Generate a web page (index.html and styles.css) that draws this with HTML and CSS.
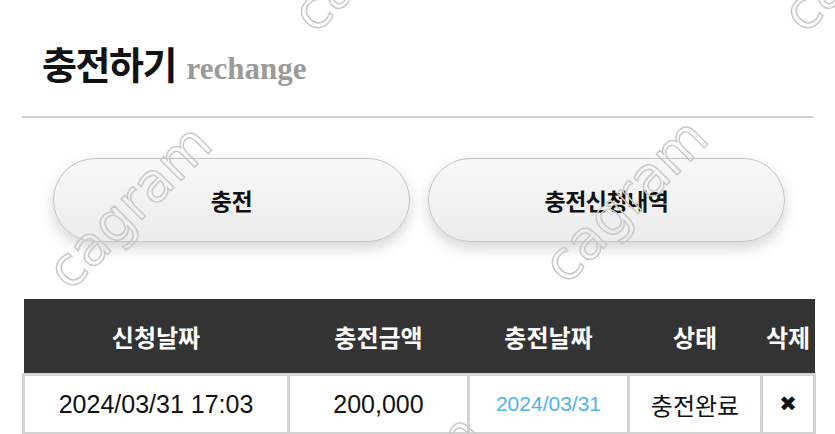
FILE: index.html
```html
<!DOCTYPE html>
<html lang="ko">
<head>
<meta charset="utf-8">
<link rel="stylesheet" href="styles.css">
</head>
<body>
<div class="page">
  <h1 class="title"><span class="title-ko">충전하기</span> <span class="title-en">rechange</span></h1>
  <hr class="divider">
  <div class="tabs">
    <button class="pill">충전</button>
    <button class="pill">충전신청내역</button>
  </div>
  <table class="list">
    <thead>
      <tr>
        <th class="c1">신청날짜</th>
        <th class="c2">충전금액</th>
        <th class="c3">충전날짜</th>
        <th class="c4">상태</th>
        <th class="c5">삭제</th>
      </tr>
    </thead>
    <tbody>
      <tr>
        <td>2024/03/31 17:03</td>
        <td>200,000</td>
        <td class="date">2024/03/31</td>
        <td class="ko">충전완료</td>
        <td class="del">✖</td>
      </tr>
    </tbody>
  </table>
  <div class="wm wm1">cagram</div>
  <div class="wm wm2">cagram</div>
  <div class="wm wm3">cagram</div>
  <div class="wm wm4">cagram</div>
  <div class="wm wm5">cagram</div>
</div>
</body>
</html>
```

FILE: styles.css
```css
html, body {
  margin: 0;
  padding: 0;
  background: #fff;
  overflow: hidden;
}
.page {
  position: relative;
  width: 835px;
  height: 434px;
  overflow: hidden;
  padding: 0 22px;
  box-sizing: border-box;
  font-family: "Noto Sans CJK KR", "Liberation Sans", sans-serif;
}
.title {
  margin: 0;
  padding: 41px 0 0 20px;
  font-size: 38px;
  line-height: 44px;
  white-space: nowrap;
}
.title-ko {
  font-size: 38px;
  font-weight: 700;
  color: #111;
  letter-spacing: -1.5px;
}
.title-en {
  font-family: "Liberation Serif", serif;
  font-size: 31px;
  font-weight: 700;
  color: #9a9a9a;
  margin-left: 0;
}
.divider {
  margin: 25px 0 0 0;
  border: 0;
  height: 2px;
  background: #cfcfcf;
}
.tabs {
  display: flex;
  gap: 18px;
  padding: 40px 0 0 31px;
  height: 181px;
  box-sizing: border-box;
}
.pill {
  width: 357px;
  height: 84px;
  border-radius: 42px;
  border: 1.5px solid #c4c4c4;
  background: linear-gradient(#f8f8f8, #ececec);
  box-shadow: 0 6px 14px rgba(0,0,0,0.17);
  font-family: "Noto Sans CJK KR", sans-serif;
  font-size: 23px;
  font-weight: 700;
  color: #111;
  padding: 0;
  letter-spacing: -0.5px;
}
.list {
  width: 791px;
  border-collapse: collapse;
  table-layout: fixed;
}
.list th {
  background: #333;
  color: #fff;
  font-size: 24px;
  font-weight: 700;
  height: 74px;
  padding: 0;
  border: 0;
}
.list .c1 { width: 265px; }
.list .c2 { width: 180px; }
.list .c3 { width: 160px; }
.list .c4 { width: 133px; }
.list .c5 { width: 53px; }
.list td {
  height: 56px;
  padding: 0;
  text-align: center;
  border: 3px solid #d4d4d4;
  font-family: "Liberation Sans", "Noto Sans CJK KR", sans-serif;
  font-size: 25px;
  color: #111;
}
.list td.date {
  color: #4fb3e8;
  font-size: 21px;
}
.list td.ko {
  font-family: "Noto Sans CJK KR", sans-serif;
  font-size: 24px;
}
.list td.del {
  font-family: "DejaVu Sans", sans-serif;
  font-size: 21px;
}
.wm {
  position: absolute;
  font-family: "DejaVu Sans", sans-serif;
  font-size: 54px;
  line-height: 56px;
  color: transparent;
  -webkit-text-stroke: 1.5px #c9c9c9;
  transform: rotate(-45deg);
  transform-origin: 0 100%;
  white-space: nowrap;
  pointer-events: none;
}
.wm1 { left: 77px; top: 243px; }
.wm2 { left: 573px; top: 237px; }
.wm3 { left: 322px; top: -14px; }
.wm4 { left: 812px; top: -14px; }
.wm5 { left: 347px; top: 533px; }
```
